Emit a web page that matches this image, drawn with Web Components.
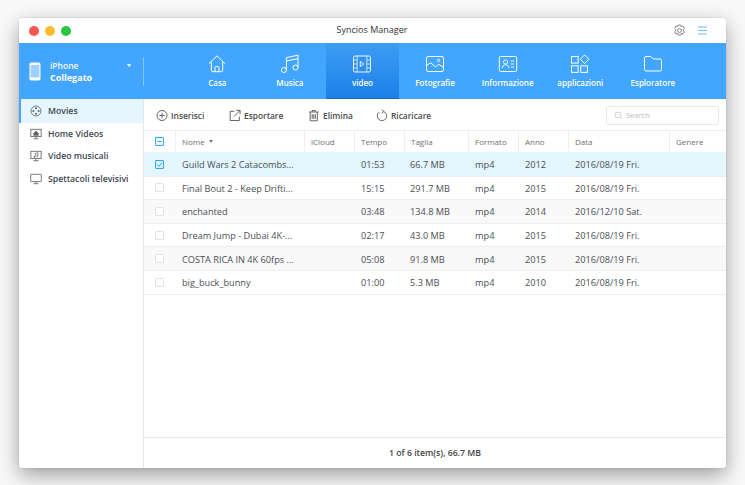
<!DOCTYPE html>
<html lang="it"><head><meta charset="utf-8"><title>Syncios Manager</title>
<style>
html,body{margin:0;height:100%;background:#f8f8f8;}
body{padding:18px 0 0 19px;box-sizing:border-box;overflow:hidden;font-family:"Open Sans","Liberation Sans",sans-serif;}
</style></head><body>
<app-window>
  <title-bar slot="title"></title-bar>
  <top-bar slot="top">
    <device-box></device-box>
    <nav-item label="Casa" icon="home"></nav-item>
    <nav-item label="Musica" icon="music"></nav-item>
    <nav-item label="video" icon="video" active></nav-item>
    <nav-item label="Fotografie" icon="photo"></nav-item>
    <nav-item label="Informazione" icon="info"></nav-item>
    <nav-item label="applicazioni" icon="apps"></nav-item>
    <nav-item label="Esploratore" icon="folder"></nav-item>
  </top-bar>
  <side-bar slot="side">
    <side-item icon="reel" active>Movies</side-item>
    <side-item icon="home">Home Videos</side-item>
    <side-item icon="mv">Video musicali</side-item>
    <side-item icon="tv">Spettacoli televisivi</side-item>
  </side-bar>
  <tool-bar slot="tools">
    <tool-button icon="plus" style="width:73px">Inserisci</tool-button>
    <tool-button icon="export" style="width:79px">Esportare</tool-button>
    <tool-button icon="trash" style="width:68px">Elimina</tool-button>
    <tool-button icon="reload">Ricaricare</tool-button>
    <search-box></search-box>
  </tool-bar>
  <media-table slot="table"></media-table>
  <status-bar slot="status">1 of 6 item(s), 66.7 MB</status-bar>
</app-window>
<script>
const def=(n,html)=>customElements.define(n,class extends HTMLElement{
  constructor(){super();this.attachShadow({mode:'open'}).innerHTML=typeof html==='function'?html(this):html;}
});
const S=(w,h,body,extra='')=>`<svg width="${w}" height="${h}" viewBox="0 0 ${w} ${h}" fill="none" stroke="currentColor" ${extra}>${body}</svg>`;
const navIcons={
 home:S(20,20,'<path d="M2 9.600 10 1.800l8 7.800" stroke-width="1"/><path d="M4.300 8v8.200q0 1.500 1.500 1.500h8.400q1.500 0 1.500-1.500V8" stroke-width="1"/><path d="M8 17.700v-4q0-1.200 1.200-1.200h1.600q1.200 0 1.200 1.200v4" stroke-width="1"/>'),
 music:S(20,20,'<path d="M6.400 16V3.600L18 1.200V13.600M6.400 7 18 4.600" stroke-width="1"/><circle cx="3.900" cy="16" r="2.500" stroke-width="1"/><circle cx="15.500" cy="13.600" r="2.500" stroke-width="1"/>'),
 video:S(20,20,'<rect x="1.500" y="2" width="17" height="16" rx="1.500" stroke-width=".9"/><path d="M5.200 2v16M14.800 2v16M1.500 6h3.700M1.500 10h3.700M1.500 14h3.700M14.800 6h3.700M14.800 10h3.700M14.800 14h3.700" stroke-width=".7"/><path d="m8.300 7.400 3.600 2.600-3.600 2.600Z" stroke-width=".9"/>'),
 photo:S(20,20,'<rect x="1.500" y="2.500" width="17" height="15" rx="1.600" stroke-width="1"/><path d="m1.700 11.500 3.800-2.800 5 4.200 3.200-2.600 4.600 3" stroke-width="1"/><circle cx="13.600" cy="6.400" r="1.200" stroke-width=".9"/>'),
 info:S(20,20,'<rect x="1.300" y="2.500" width="17.400" height="15" rx="1.400" stroke-width="1"/><circle cx="7.600" cy="8" r="2.100" stroke-width=".9"/><path d="M4.200 14.200q.4-3.600 3.400-3.600t3.400 3.600M12.800 7h3.200M12.800 10h3.200M12.800 13h3.200" stroke-width=".9"/>'),
 apps:S(20,20,'<rect x="1.500" y="2.500" width="6.600" height="6.600" stroke-width="1"/><rect x="1.500" y="11.800" width="6.600" height="6.600" stroke-width="1"/><rect x="10.800" y="11.800" width="6.600" height="6.600" stroke-width="1"/><path d="m14.600.9 4.300 4.300-4.300 4.300-4.300-4.300Z" stroke-width="1"/>'),
 folder:S(20,20,'<path d="M1.500 4q0-1.500 1.500-1.500h5L10.200 5H17q1.500 0 1.500 1.500v9q0 1.500-1.500 1.500H3q-1.500 0-1.500-1.500Z" stroke-width="1"/>')
};
const sideIcons={
 reel:S(14,14,'<circle cx="7" cy="7" r="5.800" stroke-width="1"/><circle cx="7" cy="3.900" r="1.200" fill="currentColor" stroke="none"/><circle cx="7" cy="10.100" r="1.200" fill="currentColor" stroke="none"/><circle cx="3.900" cy="7" r="1.200" fill="currentColor" stroke="none"/><circle cx="10.100" cy="7" r="1.200" fill="currentColor" stroke="none"/>'),
 home:S(14,14,'<rect x="1" y="1.500" width="12" height="8.500" stroke-width="1"/><path d="M7 3 4 6v3h6V6Z" fill="currentColor" stroke="none"/><path d="M7 10v2.400M4 12.500h6" stroke-width="1"/>'),
 mv:S(14,14,'<rect x="1" y="1.500" width="12" height="8.500" stroke-width="1"/><path d="M6 8V4l3.200-.8v3.600" stroke-width=".9"/><circle cx="5.200" cy="8" r="1" fill="currentColor" stroke="none"/><circle cx="8.400" cy="7" r="1" fill="currentColor" stroke="none"/><path d="M7 10v2.400M4 12.500h6" stroke-width="1"/>'),
 tv:S(14,14,'<rect x=".8" y="1.500" width="12.400" height="8.500" rx=".5" stroke-width="1"/><path d="M7 10v2.400M4 12.500h6" stroke-width="1"/>')
};
const toolIcons={
 plus:S(13,13,'<circle cx="6" cy="6.500" r="5" stroke-width=".9"/><path d="M6 3.800v5.400M3.300 6.500h5.400" stroke-width=".9"/>'),
 export:S(13,13,'<path d="M10.300 7.500v4H1.200V2.300h4.200" stroke-width=".9"/><path d="M5 7.500 10.900 1.600M7.300 1.400h3.800v3.800" stroke-width=".9"/>'),
 trash:S(13,13,'<path d="M1 3h9.500M4.200 3V1.500h3.100V3M2.200 3v8.800h7.100V3M4.200 5.200v4.600M5.750 5.200v4.600M7.300 5.200v4.600" stroke-width=".9"/>'),
 reload:S(13,13,'<path d="M3.400 3A4.700 4.700 0 1 0 7.600 2.500" stroke-width=".9"/><path d="M5.800.8 7.800 2.500 5.800 4.200" stroke-width=".9"/>')
};

def('app-window',`<style>
:host{display:grid;width:707px;height:450px;grid-template-columns:125px 1fr;grid-template-rows:25px 56px 31px 1fr 31px;background:#fff;border-radius:4px;overflow:hidden;box-shadow:0 7px 20px rgba(0,0,0,.36),0 0 2px rgba(0,0,0,.15);}
::slotted([slot=title]),::slotted([slot=top]){grid-column:1/-1}
::slotted([slot=side]){grid-row:3/6}
</style><slot name="title"></slot><slot name="top"></slot><slot name="side"></slot><slot name="tools"></slot><slot name="table"></slot><slot name="status"></slot>`);

def('title-bar',`<style>
:host{display:flex;align-items:center;position:relative;background:#fff;padding:0 10px;color:#4a4a4a}
.d{display:flex;gap:6px}.d i{width:10px;height:10px;border-radius:50%}
.t{flex:1;text-align:center;font:400 9px/12px "Open Sans",sans-serif;color:#333;margin-top:-1px}
.r{display:flex;gap:12px;align-items:center;padding-right:9px}
</style><div class="d"><i style="background:#fb5652"></i><i style="background:#fdbb2e"></i><i style="background:#28c73f"></i></div>
<div class="t">Syncios Manager</div>
<div class="r"><span style="color:#666;display:flex">${S(13,13,'<path d="m5.200 1h2.600l.5 1.700 1.600-.7 1.400 2.300-1.200 1.200v1l1.200 1.200-1.400 2.300-1.600-.7-.5 1.700H5.200l-.5-1.700-1.600.7-1.400-2.300 1.200-1.200v-1L1.700 4.300 3.100 2l1.600.7Z" stroke-width=".8"/><circle cx="6.500" cy="6.500" r="1.900" stroke-width=".8"/>')}</span>
<span style="color:#6cc0ec;display:flex">${S(9,9,'<path d="M0 1h9M0 4.500h9M0 8h9" stroke-width="1"/>')}</span></div>`);

def('top-bar',`<style>
:host{display:flex;background:#42a5ff;box-sizing:border-box;height:56px;color:#fff}
</style><slot></slot>`);

def('device-box',`<style>
:host{display:flex;box-sizing:border-box;width:162px;height:56px;position:relative;align-items:center;padding-left:10px;color:#fff;font-family:"Open Sans",sans-serif}
.tx{margin-left:9px;display:flex;flex-direction:column;gap:0;margin-top:1px}
.a{font-size:8.500px;font-weight:600;line-height:12px;opacity:.95}
.b{font-size:9px;font-weight:700;line-height:12px}
.c{position:absolute;left:108px;top:21px;border:2.500px solid transparent;border-top:3.500px solid #fff;border-bottom:0}
.s{position:absolute;left:124px;top:14px;width:1px;height:29px;background:rgba(255,255,255,.35)}
</style>${S(12,19,'<rect x=".5" y=".5" width="11" height="18" rx="1.800" fill="#fff" stroke="none"/><rect x="1.600" y="3" width="8.800" height="12.500" fill="#9fcfff" stroke="none"/>')}
<div class="tx"><span class="a">iPhone</span><span class="b">Collegato</span></div><i class="c"></i><i class="s"></i>`);

def('nav-item',e=>`<style>
:host{display:flex;flex-direction:column;align-items:center;box-sizing:border-box;width:72.600px;height:56px;padding-top:11px;color:#fff;font-family:"Open Sans",sans-serif;font-size:8px;font-weight:600}
:host([active]){background:linear-gradient(#3d9df5,#1c7fe6);box-shadow:inset 0 -1px 0 #1467c4}
svg{display:block}
span{margin-top:3px;line-height:11px;white-space:nowrap}
</style>${navIcons[e.getAttribute('icon')]}<span>${e.getAttribute('label')}</span>`);

def('side-bar',`<style>
:host{display:flex;flex-direction:column;background:#fff;border-right:1px solid #e6e6e6;box-sizing:border-box;width:125px;padding-top:1.500px}
</style><slot></slot>`);

def('side-item',e=>`<style>
:host{display:flex;align-items:center;box-sizing:border-box;height:22.400px;padding-left:11px;gap:6px;font:600 8.700px "Open Sans",sans-serif;color:#3c4650;white-space:nowrap}
:host([active]){background:#e6f6fe;border-left:2px solid #42a5ff;padding-left:9px;margin-top:-1.500px;height:23.900px}
svg{color:#666;flex:none;width:12px;height:12px}
</style>${sideIcons[e.getAttribute('icon')]}<slot></slot>`);

def('tool-bar',`<style>
:host{display:flex;align-items:center;background:#fff;padding:1px 7px 0 12px;box-sizing:border-box}
</style><slot></slot>`);

def('tool-button',e=>`<style>
:host{display:flex;align-items:center;gap:2px;font:600 8.400px "Open Sans",sans-serif;color:#4a4a4a;white-space:nowrap}
svg{color:#555;flex:none}
</style>${toolIcons[e.getAttribute('icon')]}<slot></slot>`);

def('search-box',`<style>
:host{display:flex;align-items:center;margin-left:auto;box-sizing:border-box;width:113px;height:19px;border:1px solid #e8e8e8;border-radius:2px;padding-left:7px;gap:4px;font:400 7.500px "Open Sans",sans-serif;color:#bdbdbd;background:#fff}
</style>${S(8,8,'<circle cx="4" cy="4" r="3" stroke-width=".7"/><path d="m6 6 1.500 1.500" stroke-width=".7"/>')}<span>Search</span>`);

def('check-box',e=>`<style>
:host{display:flex;align-items:center;justify-content:center;box-sizing:border-box;width:9px;height:9px;border:1px solid #e4e4e4;background:#fff;border-radius:1px}
:host([on]),:host([mixed]){border-color:#35a8e8}
:host([on]){background:#d8f0fb}
:host([mixed]){background:#eef9fe}
svg{display:block;color:#35a8e8;stroke:#35a8e8}
</style>${e.hasAttribute('on')?S(7,7,'<path d="m1 3.600 1.800 1.800L6 1.800" stroke-width="1"/>'):e.hasAttribute('mixed')?S(7,7,'<path d="M1.500 3.500h4" stroke-width="1"/>'):''}`);

const rows=[
['Guild Wars 2 Catacombs...','01:53','66.7 MB','mp4','2012','2016/08/19 Fri.'],
['Final Bout 2 - Keep Drifti...','15:15','291.7 MB','mp4','2015','2016/08/19 Fri.'],
['enchanted','03:48','134.8 MB','mp4','2014','2016/12/10 Sat.'],
['Dream Jump - Dubai 4K-...','02:17','43.0 MB','mp4','2015','2016/08/19 Fri.'],
['COSTA RICA IN 4K 60fps ...','05:08','91.8 MB','mp4','2015','2016/08/19 Fri.'],
['big_buck_bunny','01:00','5.3 MB','mp4','2010','2016/08/19 Fri.']];
const cols='31px 129px 50px 50px 64px 50px 50px 101px 57px';
def('media-table',`<style>
:host{display:block;background:#fff;border-top:1px solid #eee;overflow:hidden;font-family:"Open Sans",sans-serif;min-height:0}
.h,.r{display:grid;grid-template-columns:${cols};align-items:center;box-sizing:border-box}
.h{height:21px;font-size:8px;color:#6f6f6f;background:#fff}
.h>div{height:100%;display:flex;align-items:center;padding-left:6px;padding-bottom:1px;border-left:1px solid #efefef;box-sizing:border-box;gap:4px}
.h>div:first-child,.r>div:first-child{padding:0 0 0 11px;border:0}
.h i{border:2.500px solid transparent;border-top:3px solid #777;border-bottom:0;margin-top:1px}
.r{height:23.600px;font-size:9.200px;color:#4a4f55;border-top:1px solid #eee;}
.r>div{padding:1px 0 0 7px;white-space:nowrap;overflow:hidden;line-height:13px}
.r>div:nth-child(5){padding-left:6px}
.r.sel{background:#e3f5fd;border-color:#e3f5fd}
.r.alt{background:#f9f9f9}
.r.last{border-bottom:1px solid #eee;box-sizing:content-box;height:22.600px}
</style>
<div class="h"><div><check-box mixed></check-box></div><div>Nome <i></i></div><div>iCloud</div><div>Tempo</div><div>Taglia</div><div>Formato</div><div>Anno</div><div>Data</div><div>Genere</div></div>
${rows.map((r,i)=>`<div class="r ${i==0?'sel':''} ${i==2||i==4?'alt':''} ${i==5?'last':''}"><div><check-box ${i==0?'on':''}></check-box></div><div>${r[0]}</div><div></div><div>${r[1]}</div><div>${r[2]}</div><div>${r[3]}</div><div>${r[4]}</div><div>${r[5]}</div><div></div></div>`).join('')}`);

def('status-bar',`<style>
:host{display:flex;align-items:center;justify-content:center;background:#fff;border-top:1px solid #e8e8e8;font:600 8.700px "Open Sans",sans-serif;color:#444;box-sizing:border-box}
</style><slot></slot>`);
</script>
</body></html>
